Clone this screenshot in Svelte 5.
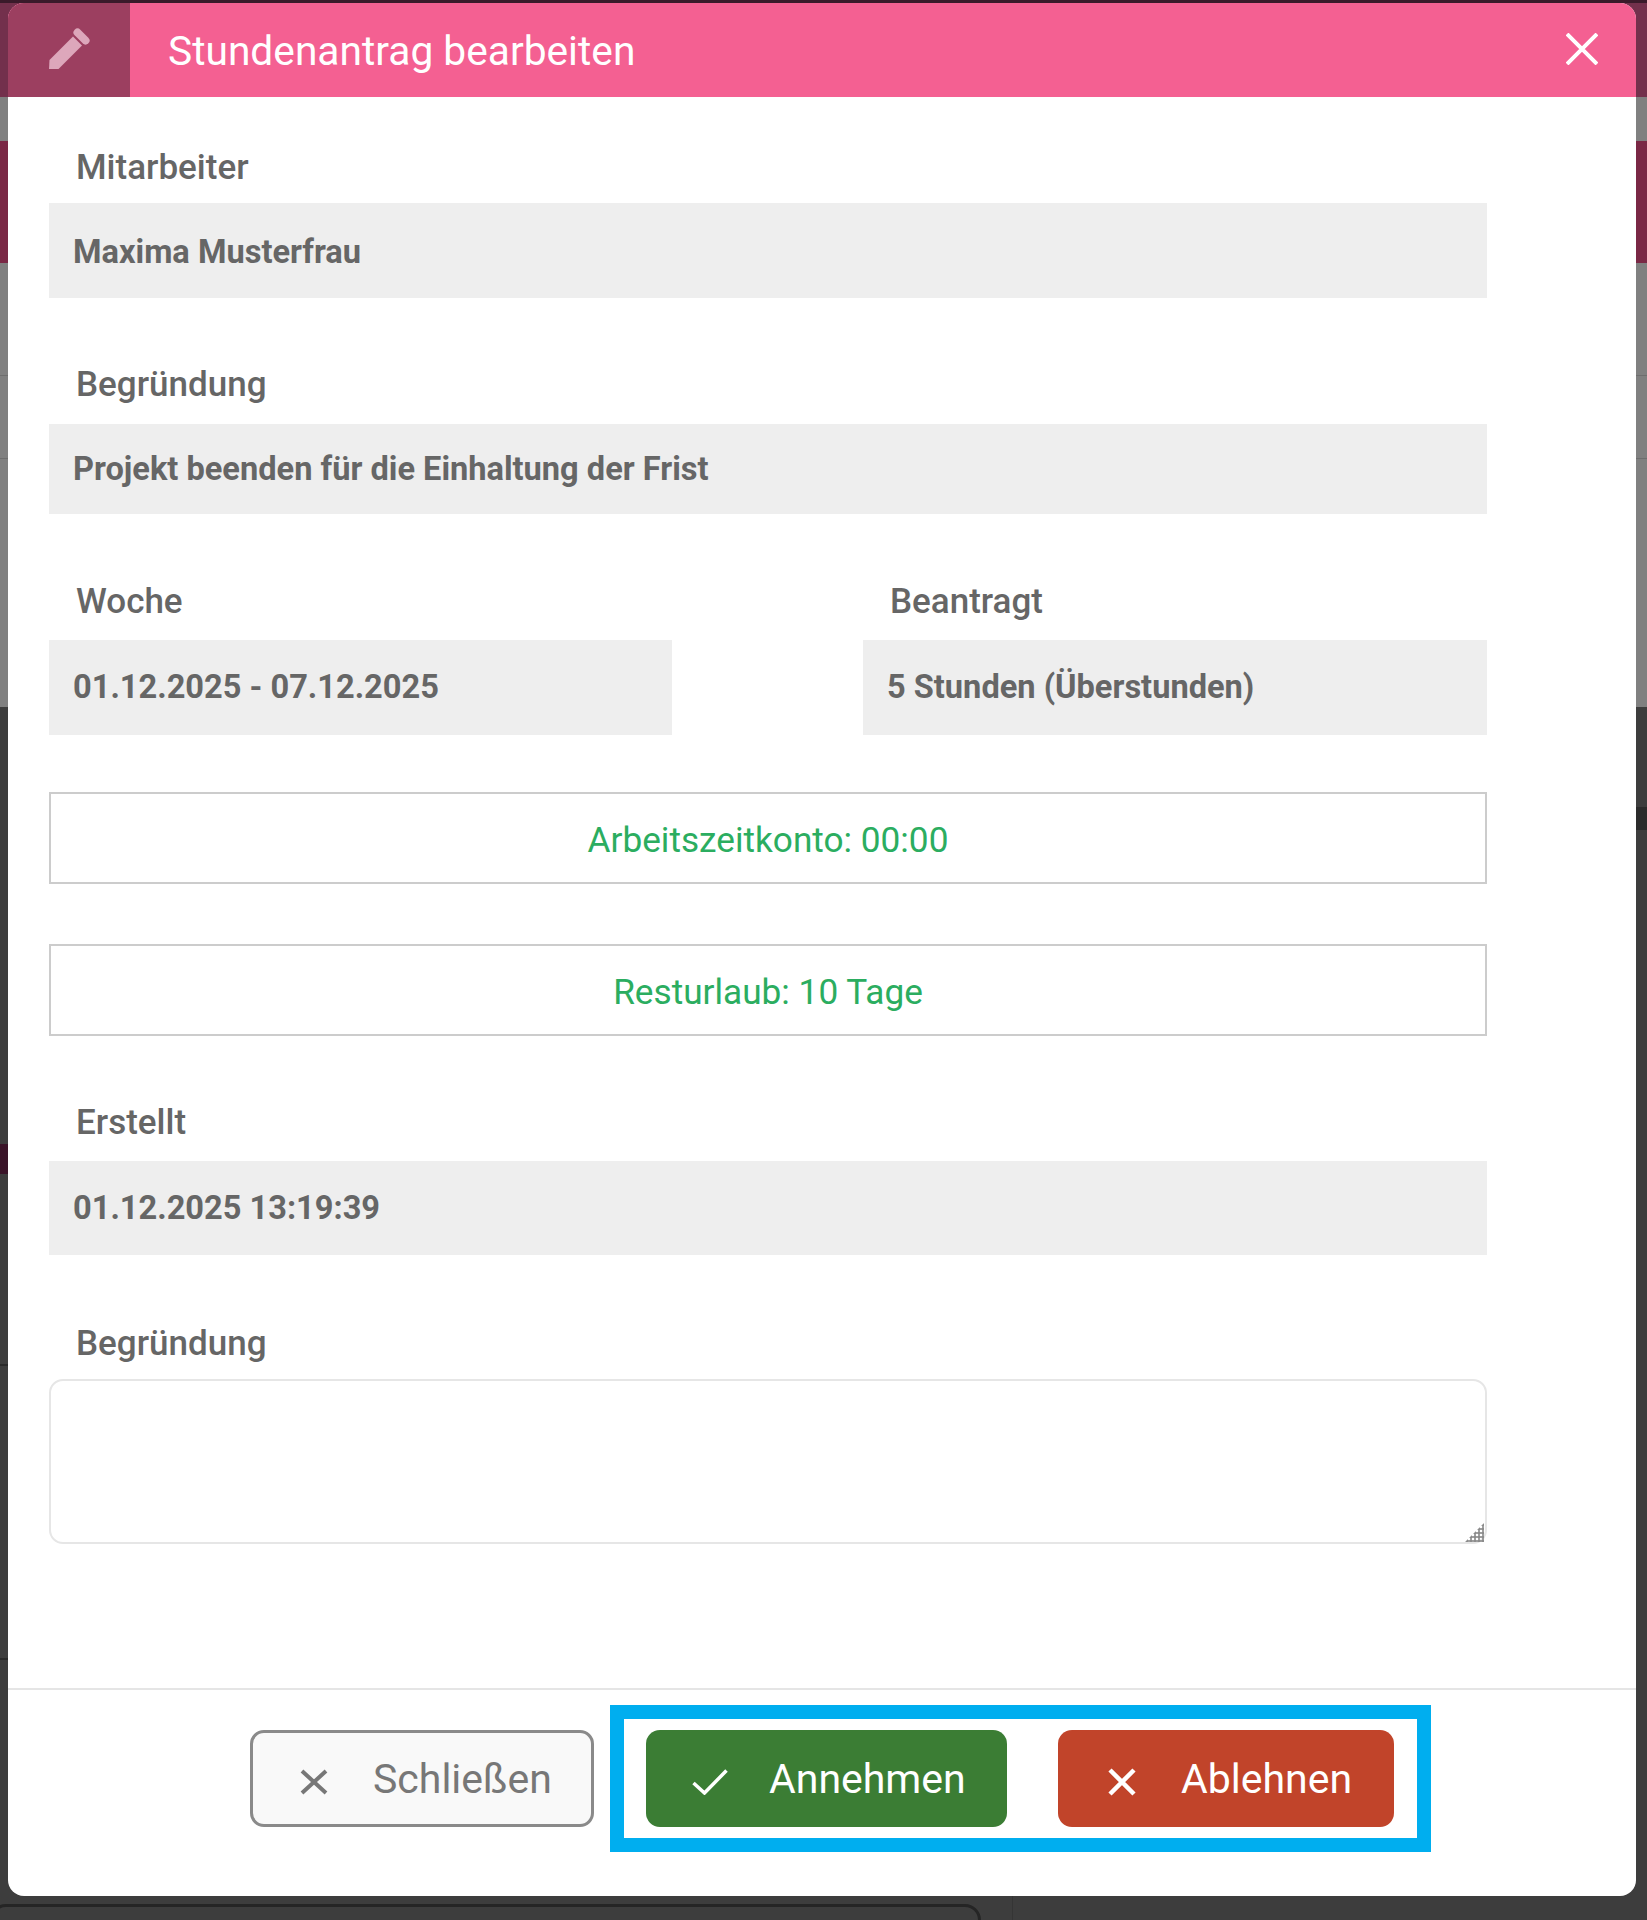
<script>
    const summaries = ['Arbeitszeitkonto: 00:00', 'Resturlaub: 10 Tage'];
</script>

<div class="page">
    <div class="backdrop">
        <div class="band band-top"></div>
        <div class="band band-head"></div>
        <div class="band band-grey-a"></div>
        <div class="band band-wine"></div>
        <div class="band band-grey-b"></div>
        <div class="band band-dark"></div>
        <div class="rule rule-a"></div>
        <div class="rule rule-b"></div>
        <div class="strip"></div>
        <div class="spot"></div>
        <div class="tick tick-a"></div>
        <div class="tick tick-b"></div>
        <div class="under-card"></div>
        <div class="under-line"></div>
    </div>

    <div class="modal">
        <header class="modal-header">
            <div class="header-icon">
                <svg width="50" height="50" viewBox="0 0 50 50" aria-hidden="true">
                    <path d="M5 44 L5.5 35 L29 11.5 L38 20.5 L14.5 44 Z" fill="#dda7bb" />
                    <path d="M33.5 7.5 L41.5 15.5" stroke="#dda7bb" stroke-width="8" stroke-linecap="round" />
                </svg>
            </div>
            <h1>Stundenantrag bearbeiten</h1>
            <svg class="close" width="32" height="32" viewBox="0 0 32 32" aria-hidden="true">
                <path d="M1 1 L31 31 M31 1 L1 31" stroke="#fff" stroke-width="4" fill="none" />
            </svg>
        </header>

        <div class="modal-body">
            <div class="group tight first">
                <span class="label">Mitarbeiter</span>
                <div class="value">Maxima Musterfrau</div>
            </div>
            <div class="group reason">
                <span class="label">Begründung</span>
                <div class="value short">Projekt beenden für die Einhaltung der Frist</div>
            </div>
            <div class="two-cols">
                <div class="group">
                    <span class="label">Woche</span>
                    <div class="value">01.12.2025 - 07.12.2025</div>
                </div>
                <div class="group">
                    <span class="label">Beantragt</span>
                    <div class="value">5 Stunden (Überstunden)</div>
                </div>
            </div>
            {#each summaries as summary}
                <div class="summary">{summary}</div>
            {/each}
            <div class="group created">
                <span class="label">Erstellt</span>
                <div class="value">01.12.2025 13:19:39</div>
            </div>
            <div class="group tight last">
                <span class="label">Begründung</span>
                <div class="textarea-wrap">
                    <textarea></textarea>
                </div>
            </div>
        </div>

        <footer class="modal-footer">
            <button class="btn btn-close">
                <svg width="28" height="28" viewBox="0 0 28 28" aria-hidden="true">
                    <path d="M2 3 L26 25 M26 3 L2 25" stroke="#777" stroke-width="4" fill="none" />
                </svg>
                Schließen
            </button>
            <div class="highlight">
                <button class="btn btn-accept">
                    <svg width="36" height="26" viewBox="0 0 36 26" aria-hidden="true">
                        <path d="M1.5 14 L12.5 24 L34.5 1.5" stroke="#fff" stroke-width="3.5" fill="none" />
                    </svg>
                    Annehmen
                </button>
                <button class="btn btn-reject">
                    <svg width="28" height="28" viewBox="0 0 28 28" aria-hidden="true">
                        <path d="M2 2 L26 26 M26 2 L2 26" stroke="#fff" stroke-width="4.5" fill="none" />
                    </svg>
                    Ablehnen
                </button>
            </div>
        </footer>
    </div>
</div>

<style>
    :global(body) {
        margin: 0;
        background: #3d3d3d;
        font-family: Roboto, "Liberation Sans", sans-serif;
    }

    .page {
        position: relative;
        height: 1920px;
        overflow: hidden;
    }

    .backdrop {
        display: flex;
        flex-direction: column;
        height: 100%;
    }

    .band-top { height: 3px; background: #3a1a2a; }
    .band-head { height: 94px; background: #73304c; }
    .band-grey-a { height: 44px; background: #808080; }
    .band-wine { height: 122px; background: #7a2845; }
    .band-grey-b { height: 444px; background: #808080; }
    .band-dark { flex: 1; background: #3d3d3d; }

    .rule {
        position: absolute;
        left: 0;
        right: 0;
        height: 1px;
        background: #6e6e6e;
    }

    .rule-a { top: 375px; }
    .rule-b { top: 458px; }

    .strip {
        position: absolute;
        top: 807px;
        right: 0;
        width: 11px;
        height: 23px;
        background: #2b2b2b;
    }

    .spot {
        position: absolute;
        top: 1144px;
        left: 0;
        width: 8px;
        height: 30px;
        background: #3a1428;
    }

    .tick {
        position: absolute;
        left: 0;
        width: 8px;
        height: 2px;
        background: #2a2a2a;
    }

    .tick-a { top: 1364px; }
    .tick-b { top: 1658px; }

    .under-card {
        position: absolute;
        left: -10px;
        bottom: -20px;
        width: 985px;
        height: 30px;
        border: 3px solid #252525;
        border-radius: 16px;
    }

    .under-line {
        position: absolute;
        left: 1012px;
        top: 1896px;
        bottom: 0;
        width: 1px;
        background: #353535;
    }

    .modal {
        position: absolute;
        top: 3px;
        left: 8px;
        width: 1628px;
        height: 1893px;
        display: flex;
        flex-direction: column;
        background: #fff;
        border-radius: 16px;
        overflow: hidden;
    }

    .modal-header {
        display: flex;
        align-items: center;
        height: 94px;
        flex-shrink: 0;
        background: #f46092;
    }

    .header-icon {
        display: flex;
        align-items: center;
        justify-content: center;
        width: 122px;
        height: 100%;
        background: #9c3f60;
    }

    .modal-header h1 {
        flex: 1;
        margin: 2px 0 0 38px;
        color: #fff;
        font-size: 40.7px;
        font-weight: 400;
    }

    .close {
        margin: 0 38px 2px 0;
    }

    .modal-body {
        flex: 1;
        padding: 51px 149px 0 41px;
    }

    .group {
        display: flex;
        flex-direction: column;
        gap: 18px;
        margin-bottom: 68px;
    }

    .group.tight { gap: 15px; }
    .group.first { margin-bottom: 67px; }
    .group.reason { gap: 19px; }
    .group.created { margin-bottom: 69px; }
    .group.last { margin-bottom: 0; }

    .label {
        height: 40px;
        line-height: 40px;
        padding-left: 27px;
        color: #666;
        font-size: 35px;
        font-weight: 500;
    }

    .value {
        height: 95px;
        line-height: 95px;
        padding-left: 24px;
        background: #eee;
        color: #666;
        font-size: 32.6px;
        font-weight: 700;
    }

    .group.first .value {
        line-height: 98px;
    }

    .value.short {
        height: 90px;
        line-height: 90px;
    }

    .group.created .value {
        height: 94px;
    }

    .two-cols {
        display: grid;
        grid-template-columns: 623px 624px;
        justify-content: space-between;
    }

    .two-cols .group {
        margin-bottom: 57px;
    }

    .summary {
        height: 88px;
        line-height: 92px;
        margin-bottom: 60px;
        border: 2px solid #ccc;
        color: #2bad60;
        font-size: 35.2px;
        text-align: center;
    }

    .summary + .group {
        margin-top: 67px;
    }

    .textarea-wrap {
        position: relative;
    }

    textarea {
        display: block;
        box-sizing: border-box;
        width: 100%;
        height: 165px;
        border: 2px solid #e6e6e6;
        border-radius: 14px;
        background: #fff;
        resize: none;
    }

    .textarea-wrap::after {
        content: "";
        position: absolute;
        right: 3px;
        bottom: 2px;
        width: 19px;
        height: 19px;
        background: radial-gradient(circle, #8c8c8c 1.5px, transparent 2px) 0 0 / 4px 4px;
        clip-path: polygon(100% 0, 100% 100%, 0 100%);
    }

    .modal-footer {
        display: flex;
        align-items: flex-start;
        gap: 16px;
        height: 208px;
        flex-shrink: 0;
        padding: 15px 0 0 242px;
        box-sizing: border-box;
        border-top: 2px solid #e5e5e5;
    }

    .highlight {
        display: flex;
        gap: 51px;
        padding: 11px 23px 11px 22px;
        border: 14px solid #00aeef;
    }

    .btn {
        display: flex;
        align-items: center;
        box-sizing: border-box;
        height: 97px;
        padding: 0;
        border: none;
        border-radius: 14px;
        color: #fff;
        font-family: inherit;
        font-size: 41px;
    }

    .btn svg {
        margin-top: 6px;
    }

    .btn-close {
        width: 344px;
        margin-top: 25px;
        padding-left: 47px;
        gap: 45px;
        border: 3px solid #8a8a8a;
        background: #f9f9f9;
        color: #777;
    }

    .btn-accept {
        width: 361px;
        padding-left: 46px;
        gap: 41px;
        background: #3b7d34;
    }

    .btn-reject {
        width: 336px;
        padding-left: 50px;
        gap: 45px;
        background: #c1442a;
    }
</style>
